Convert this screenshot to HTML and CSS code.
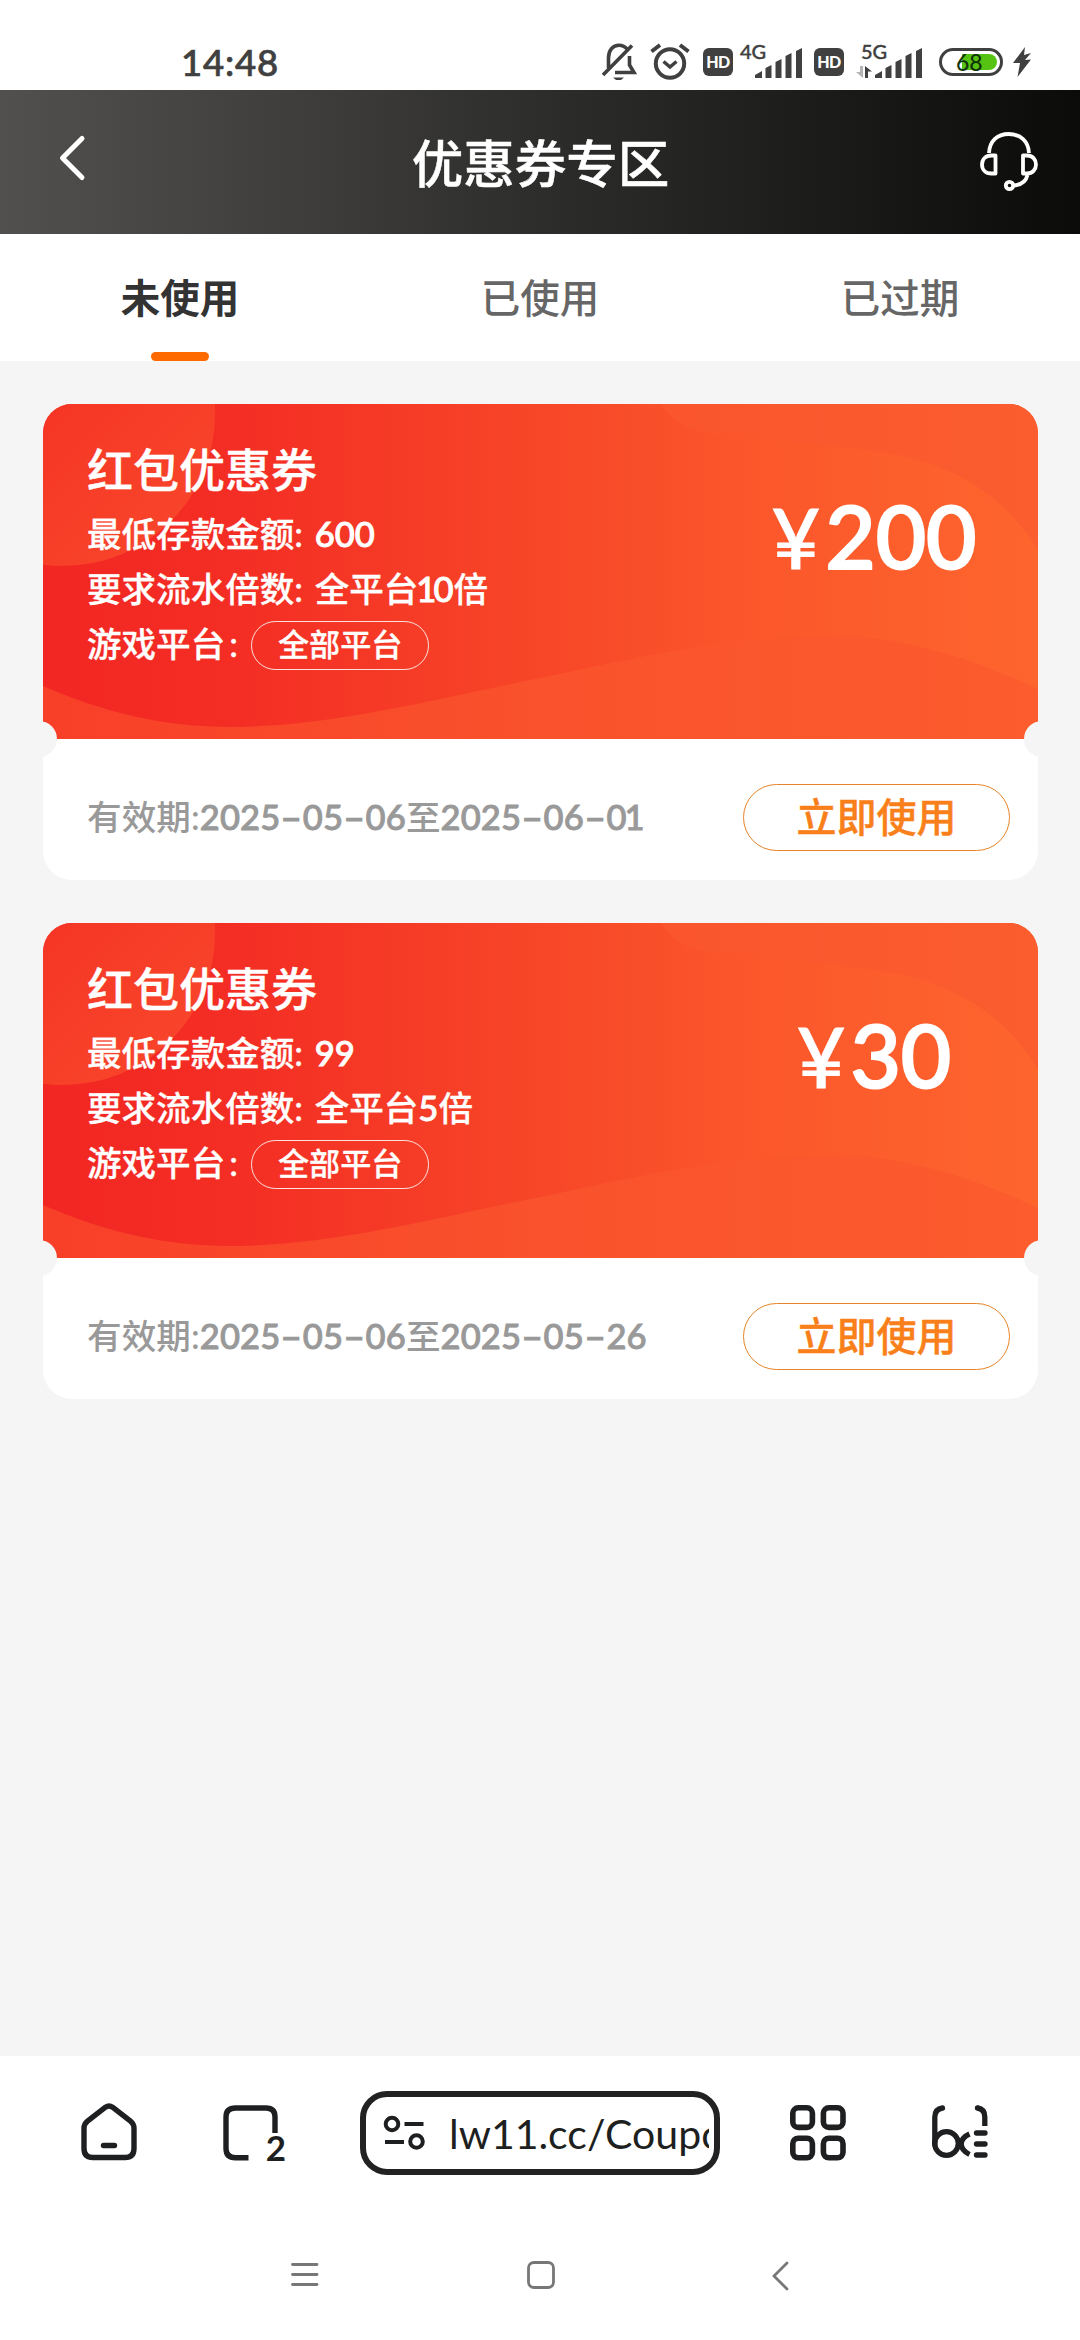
FILE: index.html
```html
<!DOCTYPE html>
<html lang="zh-CN">
<head>
<meta charset="utf-8">
<title>优惠券专区</title>
<link rel="stylesheet" href="styles.css">
</head>
<body>
<svg class="defs" width="0" height="0" aria-hidden="true">
  <defs>
    <linearGradient id="base" x1="0" x2="1" y1="0" y2="0">
      <stop offset="0" stop-color="#f22623"/><stop offset=".2" stop-color="#f42e24"/><stop offset=".5" stop-color="#f74628"/><stop offset=".7" stop-color="#fb562b"/><stop offset="1" stop-color="#fe652d"/>
    </linearGradient>
    <linearGradient id="orb" x1="0" x2="1" y1="0" y2="1">
      <stop offset=".4" stop-color="#f53324"/><stop offset=".85" stop-color="#f8442a"/>
    </linearGradient>
    <linearGradient id="wave" x1="0" x2="1" y1="0" y2="0">
      <stop offset="0" stop-color="#f83f28"/><stop offset=".5" stop-color="#f9522c"/><stop offset="1" stop-color="#fc5c2e"/>
    </linearGradient>
    <linearGradient id="cloud" x1="0" x2="1" y1="0" y2="0">
      <stop offset="0" stop-color="#fa552d"/><stop offset="1" stop-color="#fb5d2f"/>
    </linearGradient>
    <symbol id="coupon-art" viewBox="0 0 994 335" preserveAspectRatio="none">
      <rect width="994" height="335" fill="url(#base)"/>
      <circle cx="20" cy="10" r="152" fill="url(#orb)"/>
      <path d="M617 0C628 15 642 27 672 30C730 37 800 41 855 51C925 67 965 100 994 146V0Z" fill="url(#cloud)"/>
      <path d="M0 282C60 308 120 323 187 323C290 323 400 293 507 272C600 252 690 232 790 232C860 232 930 255 994 285V335H0Z" fill="url(#wave)"/>
    </symbol>
  </defs>
</svg>

<header class="status">
  <span class="clock">14:48</span>
  <div class="status-icons">
    <svg class="bell" width="36" height="38" viewBox="0 0 36 38" fill="none" stroke="#404040" stroke-width="3.6">
      <path d="M7.5 25V15C7.5 7 12 2.2 18 2.2C21.5 2.2 24.5 4 26.5 6.5M28.5 13V22L33 29.500H14M2 32L31 2.500"/><path d="M12 34.500H23L20 37H15Z" fill="#404040" stroke="none"/>
    </svg>
    <svg class="alarm" width="40" height="38" viewBox="0 0 40 38" fill="none" stroke="#404040" stroke-width="4">
      <circle cx="20" cy="20.500" r="14.200"/><path d="M1.500 8.500L10 2M38.500 8.500L30 2"/><path d="M13.500 18.500L20 24L26.500 18.500" stroke-width="3.500"/>
    </svg>
    <span class="hd">HD</span>
    <span class="net net-a">4G</span>
    <svg class="bars" width="47" height="31" viewBox="0 0 47 31" fill="#404040"><path d="M0 30V27L7 23V30ZM10.500 30V20L16.500 17V30ZM20.500 30V14L26.500 11V30ZM30.500 30V8L36.500 5V30ZM41 30V3L47 0V30Z"/></svg>
    <span class="hd hd-b">HD</span>
    <span class="net net-b">5G</span>
    <svg class="arrows" width="16" height="12" viewBox="0 0 16 12"><path d="M4 0H7V12L0 6H4Z" fill="#b4b4b4"/><path d="M9 0L16 5.500H12V12H9Z" fill="#404040"/></svg>
    <svg class="bars" width="47" height="31" viewBox="0 0 47 31" fill="#404040"><path d="M0 30V27L7 23V30ZM10.500 30V20L16.500 17V30ZM20.500 30V14L26.500 11V30ZM30.500 30V8L36.500 5V30ZM41 30V3L47 0V30Z"/></svg>
    <span class="battery"><span class="charge">68</span></span>
    <svg class="bolt" width="18" height="30" viewBox="0 0 18 30" fill="#404040"><path d="M12 0L0 16H7L4.500 30L18 12.500L12 13L18 6L11 8Z"/></svg>
  </div>
</header>

<nav class="topbar">
  <svg class="back" width="28" height="48" viewBox="0 0 28 48" fill="none" stroke="#fff" stroke-width="5" stroke-linecap="round" stroke-linejoin="round"><path d="M24 4.500L4.500 24L24 43.500"/></svg>
  <h1>优惠券专区</h1>
  <svg class="service" width="58" height="60" viewBox="0 0 58 60" fill="none" stroke="#fff" stroke-width="3.800" stroke-linejoin="round">
    <path d="M9 21C9.500 9.500 17 2 28.700 2C40.500 2 48.500 9.500 49 21"/>
    <path d="M15.500 23.500V41.500H11.500C5.500 41.500 2 37.500 2 32.500C2 27.500 5.500 23.500 11.500 23.500ZM43 23.500V41.500H47C52.500 41.500 56 37.500 56 32.500C56 27.500 52.500 23.500 47 23.500Z"/>
    <path d="M47.500 43C46 49.500 41 53 33.500 53.500"/><circle cx="29.500" cy="53.500" r="3.700"/>
  </svg>
</nav>

<div class="tabs">
  <span class="tab active">未使用</span>
  <span class="tab">已使用</span>
  <span class="tab">已过期</span>
</div>

<main class="list">
  <article class="coupon">
    <section class="face">
      <svg class="art" width="994" height="335"><use href="#coupon-art"/></svg>
      <div class="info">
        <h2>红包优惠券</h2>
        <p>最低存款金额: <span class="num">600</span></p>
        <p>要求流水倍数: 全平台<span class="num"><span class="one">1</span>0</span>倍</p>
        <p class="platform">游戏平台<span class="colon">:</span><span class="pill">全部平台</span></p>
      </div>
      <div class="amount"><span class="yen">¥</span>200</div>
    </section>
    <footer class="foot">
      <span class="date">有效期:<span class="num">2025<i>-</i>05<i>-</i>06</span>至<span class="num">2025<i>-</i>06<i>-</i>0<span class="one">1</span></span></span>
      <button class="use">立即使用</button>
    </footer>
  </article>
  <article class="coupon">
    <section class="face">
      <svg class="art" width="994" height="335"><use href="#coupon-art"/></svg>
      <div class="info">
        <h2>红包优惠券</h2>
        <p>最低存款金额: <span class="num">99</span></p>
        <p>要求流水倍数: 全平台<span class="num">5</span>倍</p>
        <p class="platform">游戏平台<span class="colon">:</span><span class="pill">全部平台</span></p>
      </div>
      <div class="amount"><span class="yen">¥</span>30</div>
    </section>
    <footer class="foot">
      <span class="date">有效期:<span class="num">2025<i>-</i>05<i>-</i>06</span>至<span class="num">2025<i>-</i>05<i>-</i>26</span></span>
      <button class="use">立即使用</button>
    </footer>
  </article>
</main>

<div class="browser">
  <svg class="home" width="56" height="58" viewBox="0 0 56 58" fill="none" stroke="#1e1f20" stroke-width="5.400" stroke-linecap="round" stroke-linejoin="round">
    <path d="M24.500 4.200Q28 1.700 31.500 4.200L49.500 18.200Q53 21 53 25.500V45.500Q53 54.500 44 54.500H12Q3 54.500 3 45.500V25.500Q3 21 6.500 18.200Z"/><path d="M22.500 42.500H33.500"/>
  </svg>
  <div class="windows">
    <svg width="56" height="56" viewBox="0 0 56 56" fill="none" stroke="#1e1f20" stroke-width="5.400"><path d="M25.500 52.700H12.500Q3 52.700 3 43.500V12Q3 3 12.500 3H43Q52 3 52 12V28"/></svg>
    <b>2</b>
  </div>
  <div class="address">
    <svg width="42" height="36" viewBox="0 0 42 36" fill="none" stroke="#1e1f20" stroke-width="4"><circle cx="9" cy="9" r="6.300"/><circle cx="33.500" cy="26.500" r="6.300"/><path d="M21.500 9H40.500M2 27H21"/></svg>
    <span>lw11.cc/Coupo</span>
  </div>
  <svg class="apps" width="56" height="56" viewBox="0 0 56 56" fill="none" stroke="#1e1f20" stroke-width="5.600"><rect x="2.800" y="2.800" width="19.600" height="19.600" rx="5.500"/><rect x="33.400" y="2.800" width="19.600" height="19.600" rx="5.500"/><rect x="2.800" y="33.200" width="19.600" height="19.600" rx="5.500"/><rect x="33.400" y="33.200" width="19.600" height="19.600" rx="5.500"/></svg>
  <svg class="reader" width="56" height="56" viewBox="0 0 56 56" fill="none" stroke="#1e1f20" stroke-width="5.300" stroke-linecap="round">
    <path d="M2.800 39V12Q3 4 10.500 3"/><circle cx="14.500" cy="38.500" r="11.800"/><path d="M37.500 29C26.500 34 26.500 44 37.500 49.500" stroke-linecap="butt"/>
    <path d="M45.500 3Q52.800 4 52.800 12V21" stroke-linecap="butt"/><path d="M45.500 3H45.600M44.500 28H53M44.500 39H53M44.500 50H53"/>
  </svg>
</div>

<div class="system">
  <svg class="menu" width="28" height="28" viewBox="0 0 28 28" stroke="#777" stroke-width="2.800" stroke-linecap="round"><path d="M1.500 3.500H26M1.500 13.500H26M1.500 23.500H26"/></svg>
  <svg class="square" width="28" height="28" viewBox="0 0 28 28" fill="none" stroke="#777" stroke-width="2.800"><rect x="1.500" y="1.500" width="25" height="25" rx="5.500"/></svg>
  <svg class="prev" width="17" height="30" viewBox="0 0 17 30" fill="none" stroke="#777" stroke-width="2.800" stroke-linecap="round"><path d="M15 2L2 15L15 28"/></svg>
</div>
</body>
</html>
```
FILE: styles.css
```css
* { box-sizing: border-box; margin: 0; padding: 0; }
body {
  width: 1080px;
  height: 2340px;
  display: flex;
  flex-direction: column;
  background: #f5f5f5;
  font-family: Lato, "Noto Sans CJK SC", sans-serif;
  font-weight: 500;
  overflow: hidden;
}
svg { display: block; flex: none; }
.defs { position: absolute; }

/* status bar */
.status {
  height: 90px;
  flex: none;
  background: #fff;
  display: flex;
  align-items: flex-start;
  justify-content: space-between;
  padding: 43px 49px 0 181px;
  color: #404040;
}
.clock { font-size: 36.5px; line-height: 38px; letter-spacing: .8px; -webkit-text-stroke: .7px currentColor; }
.status-icons { display: flex; align-items: flex-start; white-space: nowrap; }
.bell { width: 36px; margin-right: 13px; }
.alarm { margin-right: 13px; }
.hd {
  width: 30px;
  height: 28px;
  margin-top: 5px;
  border-radius: 6px;
  background: #404040;
  color: #fff;
  font-size: 16px;
  font-weight: 900;
  line-height: 28px;
  text-align: center;
  letter-spacing: -.5px;
}
.net { font-size: 20px; line-height: 16px; width: 26px; margin-left: 7px; -webkit-text-stroke: .4px currentColor; }
.net-a { margin-right: -11px; }
.bars { margin-top: 5px; }
.hd-b { margin-left: 12px; }
.net-b { margin-left: 17px; margin-right: -31px; }
.arrows { margin: 23px 3px 0 0; }
.battery {
  width: 64px;
  height: 28px;
  margin: 5px 10px 0 17px;
  border: 3px solid #404040;
  border-radius: 14px;
  padding: 3px;
}
.charge {
  display: block;
  height: 16px;
  border-radius: 8px;
  background: linear-gradient(90deg, transparent 17px, #56c313 17px);
  font-size: 23px;
  line-height: 17px;
  padding-left: 11px;
  color: #10330a;
}
.bolt { margin-top: 4px; }

/* page header */
.topbar {
  height: 144px;
  flex: none;
  display: flex;
  justify-content: space-between;
  align-items: center;
  padding: 0 42px 0 58px;
  background: linear-gradient(90deg, #51504e 0%, #3d3c3a 30%, #2d2d2b 50%, #1c1c1a 75%, #0b0b09 100%);
  color: #fff;
}
.back { margin: -8px 15px 0 0; }
h1 { font-size: 51.500px; line-height: 72px; padding-top: 2px; font-weight: 500; -webkit-text-stroke: .5px currentColor; }

.tabs { height: 127px; flex: none; display: flex; background: #fff; }
.tab {
  flex: 1;
  display: flex;
  flex-direction: column;
  align-items: center;
  font-size: 39.5px;
  line-height: 118px;
  padding-top: 5px;
  color: #666;
}
.tab.active { color: #333; font-weight: 700; }
.tab.active::after {
  content: "";
  width: 58px;
  height: 9px;
  margin-top: -5px;
  border-radius: 5px;
  background: #ff6a00;
}

/* coupons */
.list { flex: 1; padding: 43px 42px 0 43px; display: flex; flex-direction: column; gap: 43px; }
.coupon {
  position: relative;
  height: 476px;
  border-radius: 29px;
  overflow: hidden;
  background: #fff;
}
.coupon::before, .coupon::after {
  content: "";
  position: absolute;
  z-index: 1;
  top: 317px;
  width: 36px;
  height: 36px;
  border-radius: 50%;
  background: #f5f5f5;
}
.coupon::before { left: -21.600px; }
.coupon::after { right: -21.600px; }
.face {
  height: 335px;
  position: relative;
  z-index: 0;
  display: flex;
  justify-content: space-between;
  color: #fff;
}
.art { position: absolute; inset: 0; width: 100%; z-index: -1; }
.info { padding: 33px 0 0 44px; }
h2 { font-size: 46px; line-height: 66px; font-weight: 500; margin-bottom: 3px; -webkit-text-stroke: .4px currentColor; }
.info p { font-size: 34.560px; line-height: 55.300px; white-space: nowrap; word-spacing: 3px; -webkit-text-stroke: .3px currentColor; }
.info .platform { display: flex; align-items: center; height: 55px; }
.colon { margin: 0 0 0 4px; width: 22px; }
.num { -webkit-text-stroke: .9px currentColor; }
.one { letter-spacing: -3px; margin-left: -2px; }
.pill {
  width: 178px;
  height: 49px;
  margin-top: 2px;
  border: 1.500px solid rgba(255,255,255,.85);
  border-radius: 25px;
  font-size: 31.100px;
  line-height: 44px;
  text-align: center;
}
.amount {
  width: 328px;
  padding-top: 82px;
  font-size: 87px;
  line-height: 100px;
  text-align: center;
  white-space: nowrap;
  -webkit-text-stroke: 2.200px currentColor;
}
.yen { font-size: 84px; margin-right: 5px; -webkit-text-stroke: .8px currentColor; }
.foot {
  height: 141px;
  display: flex;
  align-items: center;
  justify-content: space-between;
  padding: 15px 28px 0 44px;
}
.date { font-size: 34.560px; line-height: 50px; color: #999; white-space: nowrap; letter-spacing: .1px; }
.date i { display: inline-block; font-style: normal; width: 22.500px; text-align: center; transform: scaleX(1.700); }
.use {
  width: 267px;
  height: 67px;
  border: 1.500px solid #e58428;
  border-radius: 34px;
  background: #fff;
  color: #f97f1a;
  font: 500 40px/60px Lato, "Noto Sans CJK SC", sans-serif;
  -webkit-text-stroke: .4px currentColor;
}

/* browser toolbar */
.browser {
  height: 160px;
  flex: none;
  background: #fff;
  display: flex;
  align-items: flex-start;
  padding: 35px 0 0 81px;
}
.home { margin: 12px 86px 0 0; }
.windows { width: 62px; margin: 14px 75px 0 0; display: flex; position: relative; }
.windows b { position: absolute; right: -1px; top: 25px; font-size: 35px; line-height: 35px; font-weight: 700; color: #1e1f20; }
.address {
  width: 360px;
  height: 84px;
  border: 6px solid #222;
  border-radius: 27px;
  display: flex;
  align-items: center;
  padding: 0 5px 0 17px;
  gap: 24px;
  font-size: 41px;
  font-weight: 400;
  color: #1e1f20;
}
.address span { flex: 1; overflow: hidden; white-space: nowrap; }
.apps { margin: 14px 86px 0 70px; }
.reader { margin-top: 14px; }

/* system navigation */
.system { height: 124px; flex: none; background: #fff; display: flex; align-items: flex-start; padding: 45px 0 0 291px; }
.menu { margin-right: 208px; }
.square { margin-right: 217px; }
```
